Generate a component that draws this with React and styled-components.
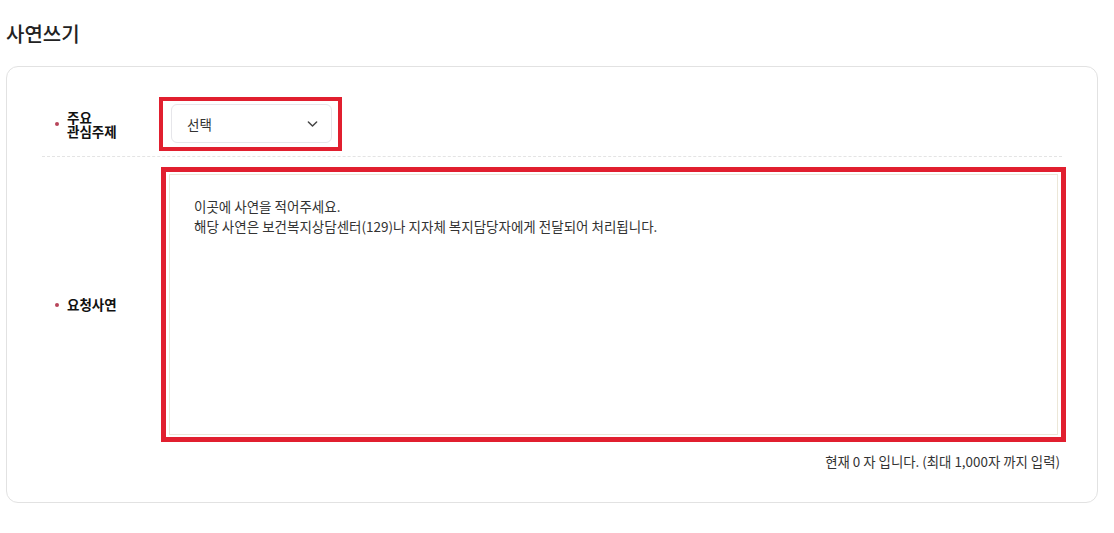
import React, { useState } from 'react';
import styled, { createGlobalStyle } from 'styled-components';

const Colors = {
  text: '#222',
  sub: '#333',
  line: '#e2e2e2',
  mark: '#e11f2f',
  dot: '#b8455a',
};

const GlobalStyle = createGlobalStyle`
  html, body {
    margin: 0;
    padding: 0;
    background: #fff;
  }
  body {
    font-family: 'Noto Sans CJK KR', 'Noto Sans', sans-serif;
    color: ${Colors.text};
  }
  * {
    box-sizing: border-box;
  }
`;

const MAX_LENGTH = 1000;

function App() {
  const [story, setStory] = useState('');

  return (
    <Page>
      <GlobalStyle />
      <Title>사연쓰기</Title>
      <Card>
        <Row>
          <Label>
            주요
            <br />
            관심주제
          </Label>
          <Highlight>
            <Select>
              <span>선택</span>
              <Chevron viewBox="0 0 12 8" aria-hidden="true">
                <path d="M1.5 1.8 L6 6.2 L10.5 1.8" />
              </Chevron>
            </Select>
          </Highlight>
        </Row>
        <Divider />
        <Row $gap>
          <Label>요청사연</Label>
          <Highlight $wide>
            <StoryInput
              value={story}
              maxLength={MAX_LENGTH}
              onChange={(e) => setStory(e.target.value)}
              placeholder={
                '이곳에 사연을 적어주세요.\n해당 사연은 보건복지상담센터(129)나 지자체 복지담당자에게 전달되어 처리됩니다.'
              }
            />
          </Highlight>
        </Row>
        <Counter>
          현재 {story.length} 자 입니다. (최대 1,000자 까지 입력)
        </Counter>
      </Card>
    </Page>
  );
}

export default App;

const Page = styled.div`
  padding: 20px 16px 30px 6px;
`;

const Title = styled.h2`
  margin: 0 0 18px;
  font-size: 20px;
  line-height: 28px;
  font-weight: 500;
  color: ${Colors.text};
`;

const Card = styled.section`
  border: 1px solid ${Colors.line};
  border-radius: 12px;
  padding: 30px 35px 32px 35px;
`;

const Row = styled.div`
  display: grid;
  grid-template-columns: 117px 1fr;
  align-items: center;
  padding: ${(p) => (p.$gap ? '10px 0 0' : '0 0 5px')};
`;

const Label = styled.div`
  position: relative;
  padding-left: 25px;
  font-size: 13.5px;
  line-height: 14.5px;
  font-weight: 700;
  color: #111;

  &::before {
    content: '';
    position: absolute;
    left: 13px;
    top: 50%;
    width: 4px;
    height: 4px;
    margin-top: -2px;
    border-radius: 50%;
    background: ${Colors.dot};
  }
`;

const Highlight = styled.div`
  border: ${(p) => (p.$wide ? '5px' : '4px')} solid ${Colors.mark};
  width: ${(p) => (p.$wide ? 'auto' : '183px')};
  height: ${(p) => (p.$wide ? '275px' : '54px')};
  margin: ${(p) => (p.$wide ? '0 -4px 0 2px' : '0')};
  padding: ${(p) => (p.$wide ? '2px 3px' : '3px 6px 4px 8px')};
  display: flex;
`;

const Select = styled.div`
  flex: 1;
  display: flex;
  align-items: center;
  justify-content: space-between;
  padding: 0 13px 0 15px;
  border: 1px solid #e6e6ea;
  border-radius: 6px;
  background: #fff;
  font-size: 13.5px;
  color: ${Colors.sub};
  cursor: pointer;
`;

const Chevron = styled.svg`
  width: 11px;
  height: 8px;
  fill: none;
  stroke: #444;
  stroke-width: 1.6;
  stroke-linecap: round;
  stroke-linejoin: round;
`;

const Divider = styled.hr`
  margin: 0;
  border: 0;
  border-top: 1px dashed #e4e4e4;
`;

const StoryInput = styled.textarea`
  flex: 1;
  resize: none;
  border: 1px solid #ece7d8;
  outline: none;
  padding: 21px 24px;
  font-family: 'Noto Sans CJK KR', 'Noto Sans', sans-serif;
  font-size: 13.5px;
  line-height: 20px;
  color: ${Colors.sub};

  &::placeholder {
    color: ${Colors.sub};
    opacity: 1;
  }
`;

const Counter = styled.p`
  margin: 10px 2px 0 0;
  text-align: right;
  font-size: 13.4px;
  line-height: 18px;
  color: ${Colors.sub};
`;
